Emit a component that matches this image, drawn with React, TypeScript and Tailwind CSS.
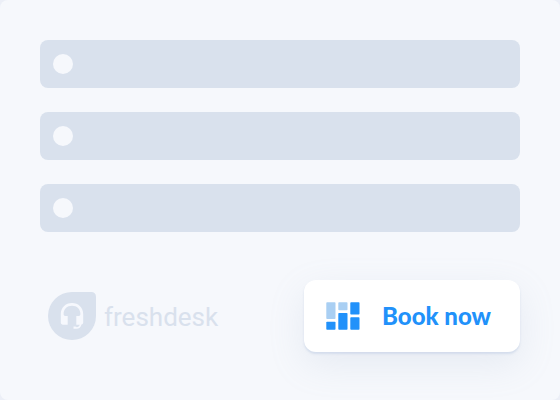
const rows = ['first', 'second', 'third']

function FreshdeskMark() {
  return (
    <svg className="size-12 shrink-0" viewBox="0 0 48 48" aria-hidden="true">
      <path
        className="fill-[#d9e1ed]"
        d="M24 0H43.5A4.5 4.5 0 0 1 48 4.5V24A24 24 0 1 1 24 0Z"
      />
      <path
        className="fill-[#f6f8fd]"
        d="M24 11C17.5 11 12.8 15.8 12.8 22V30.5C12.8 31.9 13.6 32.7 15 32.7H19.7V24H17.2C16.2 24 15.6 23.3 15.6 22C15.6 17.3 19 13.8 24 13.8S32.4 17.3 32.4 22C32.4 23.3 31.8 24 30.8 24H28.3V32.7H31.7C31.3 34.2 30.3 35 28.8 35.2C28.4 34.7 27.8 34.5 27.1 34.5H25.5V36.8H28.2C31 36.8 33 35.3 33.5 32.5C34.6 32.2 35.2 31.6 35.2 30.5V22C35.2 15.8 30.5 11 24 11Z"
      />
    </svg>
  )
}

function BoardIcon() {
  return (
    <svg className="h-7 w-[34px] shrink-0" viewBox="0 0 34 28" aria-hidden="true">
      <g className="fill-[#a9cff3]">
        <rect x="0.3" y="0.3" width="9.2" height="16.7" rx="0.8" />
        <rect x="12.3" y="0.3" width="9.2" height="8" rx="0.8" />
      </g>
      <g className="fill-[#2191fa]">
        <rect x="0.3" y="19.7" width="9.2" height="8" rx="0.8" />
        <rect x="12.3" y="11" width="9.2" height="16.7" rx="0.8" />
        <rect x="24.3" y="0.3" width="9.2" height="12.2" rx="0.8" />
        <rect x="24.3" y="15.2" width="9.2" height="12.5" rx="0.8" />
      </g>
    </svg>
  )
}

export default function App() {
  return (
    <div className="bg-[#eceff7]">
      <main className="flex min-h-screen flex-col gap-12 rounded-lg bg-[#f6f8fc] p-10">
        <ul className="space-y-6">
          {rows.map((row) => (
            <li key={row} className="flex h-12 items-center rounded-lg bg-[#d9e1ed] px-3">
              <span className="ml-px size-5 rounded-full bg-[#f6f8fc]" />
            </li>
          ))}
        </ul>

        <div className="flex items-center justify-between">
          <div className="flex items-center gap-2 pl-2">
            <FreshdeskMark />
            <span className="pt-0.5 font-['Roboto',sans-serif] text-[26px] leading-8 text-[#d9e1ed]">
              freshdesk
            </span>
          </div>

          <button
            type="button"
            className="flex h-[72px] items-center gap-[22px] rounded-xl bg-white pr-[29px] pl-[22px] shadow-[0_2px_2px_rgba(190,204,228,0.5),0_12px_36px_rgba(150,170,190,0.16)]"
          >
            <BoardIcon />
            <span className="font-['Lato',sans-serif] text-2xl font-black text-[#2191fa]">
              Book now
            </span>
          </button>
        </div>
      </main>
    </div>
  )
}
